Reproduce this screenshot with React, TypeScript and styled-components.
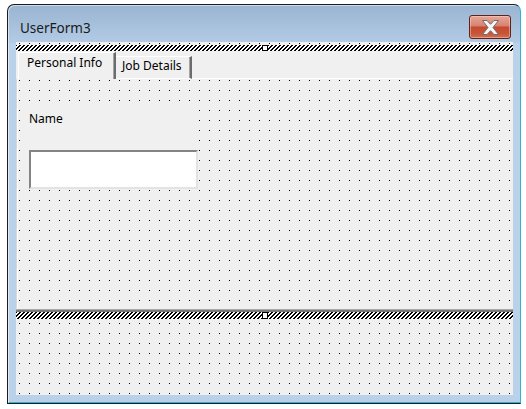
import { useId } from "react";
import styled, { createGlobalStyle, css } from "styled-components";

const GlobalStyle = createGlobalStyle`
  body {
    margin: 0;
    background: #ffffff;
    font-family: "Noto Sans", "DejaVu Sans", sans-serif;
  }
`;

// 1px black dots every 10px, like the VBA designer grid
const dotGrid = (x: number, y: number) => css`
  background-color: #f0f0f0;
  background-image: conic-gradient(at 1px 1px, transparent 75%, #000 0);
  background-size: 10px 10px;
  background-position: ${x}px ${y}px;
`;

const Window = styled.div`
  box-sizing: border-box;
  width: 514px;
  height: 400px;
  margin: 4px 0 0 7px;
  padding: 0 7px 8px 8px;
  display: flex;
  flex-direction: column;
  border: 1px solid #1c1c1c;
  border-right-color: #2bb3d8;
  border-radius: 7px 7px 0 0;
  background: linear-gradient(to bottom, #99b4d2 0px, #b3cbe5 38px, #bad1ea 38px);
  box-shadow: inset 1px 1px 0 rgba(255, 255, 255, 0.55), inset 0 -1px 0 #2bb3d8;
`;

const TitleBar = styled.div`
  height: 37px;
  display: flex;
  align-items: flex-start;
  justify-content: space-between;
  flex-shrink: 0;
`;

const Title = styled.div`
  padding: 15px 0 0 4px;
  font-size: 13.5px;
  line-height: 16px;
  color: #1a1a1a;
`;

const CloseButton = styled.div`
  box-sizing: border-box;
  width: 42px;
  height: 24px;
  margin: 10px 2px 0 0;
  display: flex;
  align-items: center;
  justify-content: center;
  border: 1px solid #5e2218;
  border-radius: 3px;
  background: linear-gradient(
    to bottom,
    #e6a797 0%,
    #d98170 45%,
    #c44a30 50%,
    #c75538 80%,
    #d46f4f 100%
  );
  box-shadow: inset 0 0 0 1px rgba(255, 220, 210, 0.45);
`;

const ClientArea = styled.div`
  height: 353px;
  padding-top: 3px;
  box-sizing: border-box;
  display: flex;
  flex-direction: column;
  ${dotGrid(3, 1)}
`;

const HatchBar = styled.div<{ $h: number }>`
  height: ${(p) => p.$h}px;
  display: flex;
  flex-shrink: 0;
`;

const HatchFill = styled.svg`
  flex: 1;
  height: 100%;
  display: block;
`;

const Handle = styled.div`
  box-sizing: border-box;
  width: 6px;
  height: 100%;
  background: #fff;
  border: 1px solid #000;
`;

const MultiPage = styled.div`
  height: 261px;
  display: flex;
  flex-direction: column;
  border-bottom: 2px solid #7a7a7a;
  box-sizing: border-box;
`;

const TabStrip = styled.div`
  height: 28px;
  flex-shrink: 0;
  display: flex;
  align-items: flex-end;
  padding-left: 2px;
  background: #f0f0f0;
`;

const Tab = styled.div<{ $active?: boolean; $width: number }>`
  box-sizing: border-box;
  width: ${(p) => p.$width}px;
  height: ${(p) => (p.$active ? 27 : 23)}px;
  padding: ${(p) => (p.$active ? "2px 0 0 8px" : "1px 0 0 6px")};
  font-size: 12px;
  line-height: 16px;
  color: #000;
  white-space: nowrap;
  background: #f0f0f0;
  border-top: 1px solid #fff;
  border-left: ${(p) => (p.$active ? "1px solid #fff" : "none")};
  border-bottom: ${(p) => (p.$active ? "none" : "1px solid #fff")};
  border-right: 2px solid #6c6c6c;
  box-shadow: inset -1px 0 0 #a4a4a4;
`;

const TabFiller = styled.div`
  flex: 1;
  border-bottom: 1px solid #fff;
`;

const Page = styled.div`
  flex: 1;
  display: flex;
  flex-direction: column;
  align-items: flex-start;
  padding: 23px 0 0 3px;
  border-left: 1px solid #d8d8d8;
  border-bottom: 1px solid #a8a8a8;
  box-shadow: inset 1px 0 0 #fff;
  ${dotGrid(2, 1)}
`;

const NameLabel = styled.div`
  box-sizing: border-box;
  width: 178px;
  height: 48px;
  padding: 9px 0 0 9px;
  font-size: 12px;
  line-height: 16px;
  color: #000;
  background: #f0f0f0;
`;

const TextBox = styled.div`
  box-sizing: border-box;
  width: 169px;
  height: 39px;
  margin-left: 9px;
  background: #fff;
  border-top: 2px solid #838383;
  border-left: 2px solid #838383;
  border-right: 2px solid #e3e3e3;
  border-bottom: 2px solid #e3e3e3;
`;

// diagonal "////" stripes, 2px black / 2px white, drawn pixel-exact
const Hatch = () => {
  const id = useId().replace(/:/g, "");
  return (
    <HatchFill shapeRendering="crispEdges">
      <defs>
        <pattern id={id} width="4" height="4" patternUnits="userSpaceOnUse">
          <rect width="4" height="4" fill="#fff" />
          <rect x="3" y="0" width="1" height="1" fill="#000" />
          <rect x="0" y="0" width="1" height="1" fill="#000" />
          <rect x="2" y="1" width="2" height="1" fill="#000" />
          <rect x="1" y="2" width="2" height="1" fill="#000" />
          <rect x="0" y="3" width="2" height="1" fill="#000" />
        </pattern>
      </defs>
      <rect width="100%" height="100%" fill={`url(#${id})`} />
    </HatchFill>
  );
};

const SelectionEdge = ({ h }: { h: number }) => (
  <HatchBar $h={h}>
    <Hatch />
    <Handle />
    <Hatch />
  </HatchBar>
);

const CloseGlyph = () => (
  <svg width="19" height="17" viewBox="-1 -1 19 17">
    <path
      d="M0.5 0.5 H5 L8.5 4.3 L12 0.5 H16.5 L11 7.5 L16.5 14.5 H12 L8.5 10.7 L5 14.5 H0.5 L6 7.5 Z"
      fill="#f6f6f6"
      stroke="#6e6e6e"
      strokeWidth="1"
      strokeLinejoin="round"
    />
  </svg>
);

export default function App() {
  return (
    <>
      <GlobalStyle />
      <Window>
        <TitleBar>
          <Title>UserForm3</Title>
          <CloseButton>
            <CloseGlyph />
          </CloseButton>
        </TitleBar>
        <ClientArea>
          <SelectionEdge h={6} />
          <MultiPage>
            <TabStrip>
              <Tab $active $width={98}>
                Personal Info
              </Tab>
              <Tab $width={76}>Job Details</Tab>
              <TabFiller />
            </TabStrip>
            <Page>
              <NameLabel>Name</NameLabel>
              <TextBox />
            </Page>
          </MultiPage>
          <SelectionEdge h={7} />
        </ClientArea>
      </Window>
    </>
  );
}
